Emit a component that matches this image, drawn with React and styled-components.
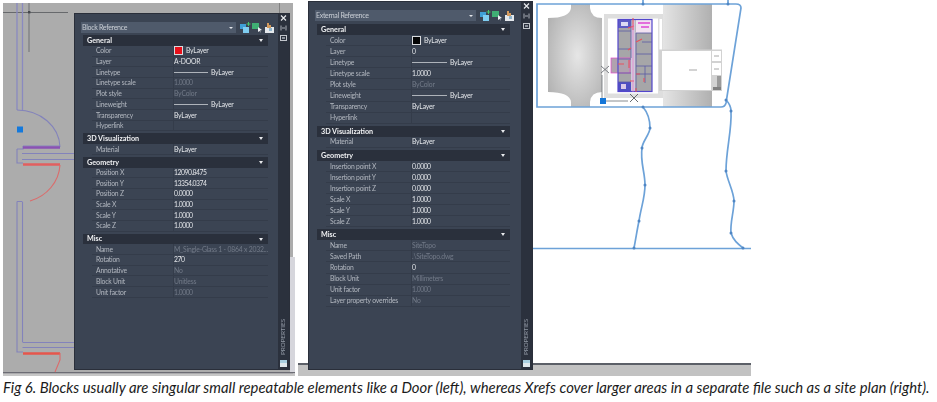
import React from "react";
import styled, { createGlobalStyle } from "styled-components";

const Global = createGlobalStyle`
  html, body { margin: 0; padding: 0; background: #fff; }
  body { width: 937px; height: 402px; overflow: hidden; font-family: "Lato", "Open Sans", sans-serif; }
`;

const Figure = styled.div`
  width: 937px;
  height: 402px;
  background: #fff;
  display: flex;
  flex-direction: column;
`;
const Shots = styled.div`
  display: flex;
  align-items: flex-start;
  height: 376px;
  filter: blur(0.4px);
`;
const Shot = styled.div`
  position: relative;
  flex: none;
  box-sizing: border-box;
  width: ${(p) => p.$w}px;
  height: ${(p) => p.$h}px;
  margin: ${(p) => p.$margin};
  padding: ${(p) => p.$padding};
  background: ${(p) => p.$bg};
`;
const Backdrop = styled.svg`
  position: absolute;
  left: 0;
  top: 0;
  display: block;
`;
const StatusStrip = styled.div`
  position: absolute;
  left: 3px;
  right: 0;
  bottom: 0;
  height: 11px;
  background: #c2c2c2;
  border-top: 2px solid #5c6068;
`;
const Panel = styled.div`
  position: relative;
  box-sizing: border-box;
  width: ${(p) => p.$w}px;
  height: ${(p) => p.$h}px;
  display: flex;
  background: #3b4453;
  border: 1px solid #2a2f3a;
  color: #c0c4cb;
  font-size: 6.8px;
  letter-spacing: -0.2px;
  line-height: 1;
`;
const Body = styled.div`
  flex: 1;
  min-width: 0;
  display: flex;
  flex-direction: column;
  padding: 8px 0 0 6px;
`;
const TitleRow = styled.div`
  display: flex;
  align-items: center;
  height: 11px;
  gap: 3px;
`;
const Combo = styled.div`
  box-sizing: border-box;
  width: ${(p) => p.$w}px;
  height: 11px;
  flex: none;
  display: flex;
  align-items: center;
  justify-content: space-between;
  padding: 0 3px 0 1px;
  background: #4f5a6b;
  color: #c9ced5;
  font-size: 7px;
  letter-spacing: -0.3px;
`;
const ComboArrow = styled.span`
  width: 0;
  height: 0;
  border-left: 2px solid transparent;
  border-right: 2px solid transparent;
  border-top: 2px solid #e4e6ea;
`;
const IconGroup = styled.div`
  display: flex;
  gap: 1px;
  margin-left: 1px;
`;
const Sections = styled.div`
  display: flex;
  flex-direction: column;
  gap: ${(p) => p.$gap}px;
  margin: ${(p) => p.$top}px 0 0 ${(p) => p.$indent}px;
  width: ${(p) => p.$w}px;
`;
const SectionHeader = styled.div`
  box-sizing: border-box;
  height: ${(p) => p.$h}px;
  display: flex;
  align-items: center;
  justify-content: space-between;
  padding: 0 5px 0 4px;
  background: #2a303c;
  color: #f0f1f3;
  font-weight: 700;
  font-size: 7.2px;
  letter-spacing: 0;
`;
const HeaderArrow = styled.span`
  width: 0;
  height: 0;
  border-left: 2.5px solid transparent;
  border-right: 2.5px solid transparent;
  border-top: 3px solid #e8eaed;
`;
const Row = styled.div`
  box-sizing: border-box;
  height: ${(p) => p.$h}px;
  margin-left: 9px;
  display: grid;
  grid-template-columns: ${(p) => p.$label}px 1fr;
  align-items: center;
  border-bottom: 1px solid #343c4a;
`;
const Label = styled.div`
  padding-left: 4px;
  color: #b3b8c0;
  white-space: nowrap;
`;
const Value = styled.div`
  display: flex;
  align-items: center;
  height: 100%;
  white-space: nowrap;
  color: ${(p) => (p.$dim ? "#727a88" : "#e3e5e9")};
  letter-spacing: ${(p) => (p.$numeric ? "-0.45px" : "-0.2px")};
  border-left: 1px solid #343c4a;
  margin-left: -1px;
`;
const Swatch = styled.span`
  width: 7px;
  height: 7px;
  flex: none;
  margin-right: 3px;
  background: ${(p) => p.$color};
  border: 1px solid #d8dadd;
`;
const LineSample = styled.span`
  width: ${(p) => p.$w}px;
  height: 1px;
  flex: none;
  margin-right: 3px;
  background: #aeb3ba;
`;
const Side = styled.div`
  position: relative;
  flex: none;
  width: 11px;
  background: #2b313d;
  display: flex;
  flex-direction: column;
  align-items: center;
  padding-top: 1px;
  color: #cfd2d7;
`;
const SideTools = styled.div`
  display: flex;
  flex-direction: column;
  align-items: center;
  gap: 4px;
  flex: 1;
`;
const SideLabel = styled.div`
  writing-mode: vertical-rl;
  transform: rotate(180deg);
  font-size: 6.4px;
  letter-spacing: -0.1px;
  color: #8f96a2;
  margin-bottom: 5px;
`;
const SideBadge = styled.div`
  width: 7px;
  height: 7px;
  margin-bottom: 2px;
  background: linear-gradient(#a9cfe0 0 50%, #dfe8ec 50%);
`;
const Caption = styled.div`
  padding: 1px 0 0 3px;
  font-family: "Lato", "Open Sans", sans-serif;
  font-style: italic;
  font-size: 14.85px;
  line-height: 20px;
  white-space: nowrap;
  color: #1b1b1b;
`;

const QuickIcons = () => (
  <IconGroup>
    <svg width="11" height="11" viewBox="0 0 11 11">
      <rect x="0" y="2" width="6" height="5" fill="#3f9fd6" />
      <rect x="3" y="5" width="6" height="6" fill="#7fcdf0" />
      <path d="M8.5 0v4M6.5 2h4" stroke="#48c46a" strokeWidth="1" />
    </svg>
    <svg width="11" height="11" viewBox="0 0 11 11">
      <rect x="0" y="1" width="7" height="6" fill="#3fae74" />
      <path d="M6 5l4 3-2 .4L9 11 7.6 9 6 10z" fill="#eef1f4" />
    </svg>
    <svg width="11" height="11" viewBox="0 0 11 11">
      <rect x="1" y="5" width="9" height="6" fill="#e4e8ec" />
      <rect x="5" y="6" width="3" height="3" fill="#8fb4cc" />
      <path d="M3 1h2v2h2v3H3z" fill="#d49a5c" />
    </svg>
  </IconGroup>
);

const SideIcons = () => (
  <SideTools>
    <svg width="7" height="6" viewBox="0 0 7 6">
      <path d="M1 .5l5 5M6 .5l-5 5" stroke="#e6e8eb" strokeWidth="1.2" />
    </svg>
    <svg width="7" height="6" viewBox="0 0 7 6">
      <path d="M1 .5v5M6 .5v5M2 3h3" stroke="#a9aeb7" strokeWidth="1" />
    </svg>
    <svg width="7" height="6" viewBox="0 0 7 6">
      <rect x=".5" y=".5" width="6" height="5" fill="none" stroke="#c2c6cc" />
      <rect x="2" y="2" width="3" height="2" fill="#8c929c" />
    </svg>
  </SideTools>
);

const cell = (label, value, opts = {}) => ({ label, value, ...opts });
const generalRows = (layer, color, scaleDim) => [
  cell("Color", "ByLayer", { swatch: color }),
  cell("Layer", layer),
  cell("Linetype", "ByLayer", { line: true }),
  cell("Linetype scale", "1.0000", { dim: scaleDim }),
  cell("Plot style", "ByColor", { dim: true }),
  cell("Lineweight", "ByLayer", { line: true }),
  cell("Transparency", "ByLayer"),
  cell("Hyperlink", ""),
];
const scaleRows = ["X", "Y", "Z"].map((a) => cell(`Scale ${a}`, "1.0000"));

const blockSections = [
  { title: "General", rows: generalRows("A-DOOR", "#e8101a", true) },
  { title: "3D Visualization", rows: [cell("Material", "ByLayer")] },
  {
    title: "Geometry",
    rows: [
      cell("Position X", "12090.8475"),
      cell("Position Y", "13354.0374"),
      cell("Position Z", "0.0000"),
      ...scaleRows,
    ],
  },
  {
    title: "Misc",
    rows: [
      cell("Name", "M_Single-Glass 1 - 0864 x 2032...", { dim: true }),
      cell("Rotation", "270"),
      cell("Annotative", "No", { dim: true }),
      cell("Block Unit", "Unitless", { dim: true }),
      cell("Unit factor", "1.0000", { dim: true }),
    ],
  },
];
const xrefSections = [
  { title: "General", rows: generalRows("0", "#050505", false) },
  { title: "3D Visualization", rows: [cell("Material", "ByLayer")] },
  {
    title: "Geometry",
    rows: [
      cell("Insertion point X", "0.0000"),
      cell("Insertion point Y", "0.0000"),
      cell("Insertion point Z", "0.0000"),
      ...scaleRows,
    ],
  },
  {
    title: "Misc",
    rows: [
      cell("Name", "SiteTopo", { dim: true }),
      cell("Saved Path", ".\\SiteTopo.dwg", { dim: true }),
      cell("Rotation", "0"),
      cell("Block Unit", "Millimeters", { dim: true }),
      cell("Unit factor", "1.0000", { dim: true }),
      cell("Layer property overrides", "No", { dim: true }),
    ],
  },
];

const PropertiesPanel = ({ w, h, title, comboW, sections, rowH, gap, top, indent, listW, labelW, lineW }) => (
  <Panel $w={w} $h={h}>
    <Body>
      <TitleRow>
        <Combo $w={comboW}>
          {title}
          <ComboArrow />
        </Combo>
        <QuickIcons />
      </TitleRow>
      <Sections $gap={gap} $top={top} $indent={indent} $w={listW}>
        {sections.map((s) => (
          <div key={s.title}>
            <SectionHeader $h={rowH}>
              {s.title}
              <HeaderArrow />
            </SectionHeader>
            {s.rows.map((r) => (
              <Row key={r.label} $h={rowH} $label={labelW}>
                <Label>{r.label}</Label>
                <Value $dim={r.dim} $numeric={/^[\d.]+$/.test(r.value)}>
                  {r.swatch && <Swatch $color={r.swatch} />}
                  {r.line && <LineSample $w={lineW} />}
                  {r.value}
                </Value>
              </Row>
            ))}
          </div>
        ))}
      </Sections>
    </Body>
    <Side>
      <SideIcons />
      <SideLabel>PROPERTIES</SideLabel>
      <SideBadge />
    </Side>
  </Panel>
);

const DoorDrawing = () => (
  <Backdrop width="295" height="373" viewBox="3 3 295 373">
    <rect x="290" y="257" width="8" height="115" fill="#d6d6dc" />
    <rect x="3" y="372" width="295" height="1.5" fill="#6c6c74" />
    <rect x="3" y="373.5" width="295" height="3" fill="#c6c6c6" />
    <path d="M3 12.5H68" stroke="#55585c" strokeWidth="0.8" />
    <path d="M29 3V52" stroke="#6e7074" strokeWidth="1" />
    <rect x="28" y="11" width="2.4" height="2.4" fill="#44474c" />
    <path d="M279.5 3V13" stroke="#777" strokeWidth="0.8" />
    <g fill="none" stroke="#8383bb" strokeWidth="1.1">
      <path d="M17 3V110M22.5 3V110" stroke="#8a8ac0" strokeWidth="1.3" />
      <path d="M17 110A43 38 0 0 1 60 147" />
      <path d="M23 146H60M17 149H23V146M17 149V163H23" />
      <path d="M22 153.500H75M22 159.500H75" />
      <path d="M17 201.500H22M17 201.500V352H23M22.500 201.500V342" />
      <path d="M22.500 342.500H75M22.500 347.500H75" />
    </g>
    <path d="M23 147.500H60" stroke="#8a52b4" strokeWidth="2.4" />
    <path d="M23 164.500H60" stroke="#e25f5f" strokeWidth="2.4" />
    <path d="M60 165A42 40 0 0 1 30 201" fill="none" stroke="#dc6a6a" strokeWidth="1.1" />
    <path d="M23 353.500H60" stroke="#e6564c" strokeWidth="2.4" />
    <path d="M60 353V360L55 372" fill="none" stroke="#dc6a6a" strokeWidth="1.1" />
    <rect x="17" y="126.500" width="6" height="6" fill="#1479dc" />
  </Backdrop>
);

const dots = [
  [643, 107], [650, 128], [642, 148], [645, 185], [639, 221], [634, 248],
  [731, 111], [726, 171], [734, 201], [731, 233], [743, 248], [726, 100], [643, 4], [728, 4],
];

const SiteDrawing = () => (
  <Backdrop width="456" height="363" viewBox="295 0 456 363">
    <defs>
      <radialGradient id="padL" cx="0.55" cy="0.5" r="0.7">
        <stop offset="0" stopColor="#e6e6e6" />
        <stop offset="1" stopColor="#adadad" />
      </radialGradient>
      <linearGradient id="padR" x1="0" x2="1">
        <stop offset="0" stopColor="#e4e4e4" />
        <stop offset="1" stopColor="#b0b0b0" />
      </linearGradient>
    </defs>
    <path d="M571 4H590V8Q591 18 602 18V92Q591 92 590 102V107H571V102Q570 92 548 92V18Q570 18 571 8Z" fill="url(#padL)" />
    <rect x="663" y="4" width="49" height="46" fill="url(#padR)" />
    <rect x="663" y="91" width="49" height="16" fill="url(#padR)" />
    <rect x="604" y="14" width="59" height="84" fill="#dedede" />
    <rect x="608" y="18.500" width="50" height="75" fill="#fff" />
    <rect x="659.500" y="19" width="2.500" height="31" fill="#fff" />
    <rect x="659" y="49.500" width="63" height="41.500" fill="#d2d2d2" />
    <rect x="662" y="51" width="49" height="39" fill="#fff" />
    <rect x="712" y="51" width="9" height="10" fill="#fff" />
    <rect x="712" y="63" width="9" height="12" fill="#fff" />
    <rect x="717" y="76" width="4" height="13" fill="#9a9a9a" />
    <rect x="713" y="87" width="8" height="3" fill="#808080" />
    <path d="M689 70H697" stroke="#b5b5b5" strokeWidth="1.2" />
    <path d="M714 56H719M714 69H719" stroke="#a8a8a8" strokeWidth="1" />

    <rect x="618" y="19.500" width="34" height="72" fill="#a6a6a8" />
    <rect x="631" y="19.500" width="4.500" height="72" fill="#cfc9dc" />
    <rect x="636" y="20" width="16" height="13" fill="#f1e2f1" />
    <path d="M638 23h12M641 27h8" stroke="#e052d8" strokeWidth="2" opacity="0.8" />
    <path d="M618 20h13v8h-13z" fill="#3f3fd0" opacity="0.7" />
    <path d="M621 22h7v4h-7z" fill="#dcdcf4" />
    <path d="M618 82h13v10h-13z" fill="#3838c8" opacity="0.8" />
    <path d="M621 84h5v5h-5z" fill="#d8c8e8" />
    <rect x="611" y="58" width="19" height="15" fill="#b0a2ae" stroke="#e44acb" strokeWidth="0.7" />
    <g fill="none" stroke="#5c5ca4" strokeWidth="0.8">
      <rect x="618" y="19.500" width="34" height="72" stroke="#5346cc" strokeWidth="1.2" />
      <path d="M618 31H631M618 49H631M618 59H631M618 73H631M618 82H631M631 20V58M636 33V91" />
      <path d="M636 33H652M642 42H652M636 54H652M636 74H652M645 66V83M636 66H652" />
    </g>
    <g stroke="#e8525e" strokeWidth="1.1" fill="none">
      <path d="M633 18V30M628 28L634 26M629 60V68M618 64H624" />
      <path d="M628 50l3 -2M636 74h4M644 78v4M636 42l6 -3M630 81h4M636 92v-4" />
    </g>
    <path d="M633 24V92" stroke="#e878c8" strokeWidth="0.7" />

    <path d="M602 75V100M606 101H628" stroke="#6b6f74" strokeWidth="0.8" fill="none" />
    <path d="M601 66l8 7M609 66l-8 7" stroke="#6f7378" strokeWidth="0.9" />
    <path d="M630 94l8 8M638 94l-8 8" stroke="#55595e" strokeWidth="0.9" />
    <rect x="600" y="98" width="6" height="6" fill="#1476d8" />

    <g fill="none" stroke="#6da2d8" strokeWidth="1.7">
      <path d="M537 4H736Q741 4 741 8L726 103Q725 107 721 107H537Z" />
      <path d="M643 0V4M728 0V4" />
      <path d="M643 107C648 113 650 120 650 128C650 134 642 142 642 148C640 162 645 172 645 185C645 198 641 207 639 221C637 230 636 238 634 248" />
      <path d="M726 100C729 103 731 106 731 111C732 130 726 150 726 171C727 180 734 192 734 201C734 212 730 222 731 233C733 240 738 244 743 248" />
      <path d="M533 248.500H751" />
    </g>
    {dots.map(([x, y]) => (
      <circle key={`${x}-${y}`} cx={x} cy={y} r="1.500" fill="#4f86c4" />
    ))}
  </Backdrop>
);

export default function App() {
  return (
    <Figure>
      <Global />
      <Shots>
        <Shot $w={290} $h={373} $margin="3px 0 0 3px" $padding="10px 0 0 71px" $bg="#acacac">
          <DoorDrawing />
          <PropertiesPanel
            w={216}
            h={357}
            title="Block Reference"
            comboW={155}
            sections={blockSections}
            rowH={10.7}
            gap={2}
            top={2.3}
            indent={2}
            listW={185}
            labelW={82}
            lineW={34}
          />
        </Shot>
        <Shot $w={456} $h={376} $margin="0 0 0 2px" $padding="1px 0 0 13px" $bg="#fff">
          <StatusStrip />
          <SiteDrawing />
          <PropertiesPanel
            w={225}
            h={369}
            title="External Reference"
            comboW={161}
            sections={xrefSections}
            rowH={11.05}
            gap={2.1}
            top={3.2}
            indent={2}
            listW={193}
            labelW={86}
            lineW={35}
          />
        </Shot>
      </Shots>
      <Caption>Fig 6. Blocks usually are singular small repeatable elements like a Door (left), whereas Xrefs cover larger areas in a separate file such as a site plan (right).</Caption>
    </Figure>
  );
}
